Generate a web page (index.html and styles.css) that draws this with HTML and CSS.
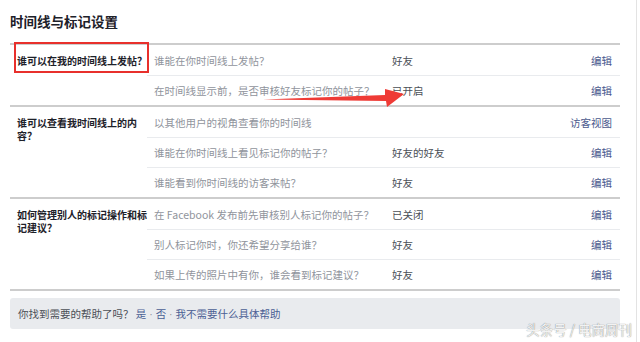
FILE: index.html
```html
<!DOCTYPE html>
<html lang="zh-CN">
<head>
  <meta charset="UTF-8" />
  <meta name="viewport" content="width=device-width, initial-scale=1.0"/>
  <title>时间线与标记设置</title>
  <link rel="stylesheet" href="styles.css">
</head>
<body>

  <div class="page">
    <h2 class="title">时间线与标记设置</h2>

    <div class="section">
      <div class="label">谁可以在我的时间线上发帖？</div>
      <div class="rows">
        <div class="row">
          <span class="question">谁能在你时间线上发帖？</span>
          <span class="value">好友</span>
          <a class="edit" href="#">编辑</a>
        </div>
        <div class="row">
          <span class="question">在时间线显示前，是否审核好友标记你的帖子？</span>
          <span class="value">已开启</span>
          <a class="edit" href="#">编辑</a>
        </div>
      </div>
    </div>

    <div class="section">
      <div class="label">谁可以查看我时间线上的内容？</div>
      <div class="rows">
        <div class="row">
          <span class="question">以其他用户的视角查看你的时间线</span>
          <span class="value"></span>
          <a class="edit" href="#">访客视图</a>
        </div>
        <div class="row">
          <span class="question">谁能在你时间线上看见标记你的帖子？</span>
          <span class="value">好友的好友</span>
          <a class="edit" href="#">编辑</a>
        </div>
        <div class="row">
          <span class="question">谁能看到你时间线的访客来帖？</span>
          <span class="value">好友</span>
          <a class="edit" href="#">编辑</a>
        </div>
      </div>
    </div>

    <div class="section last">
      <div class="label">如何管理别人的标记操作和标记建议？</div>
      <div class="rows">
        <div class="row">
          <span class="question">在 Facebook 发布前先审核别人标记你的帖子？</span>
          <span class="value">已关闭</span>
          <a class="edit" href="#">编辑</a>
        </div>
        <div class="row">
          <span class="question">别人标记你时，你还希望分享给谁？</span>
          <span class="value">好友</span>
          <a class="edit" href="#">编辑</a>
        </div>
        <div class="row">
          <span class="question">如果上传的照片中有你，谁会看到标记建议？</span>
          <span class="value">好友</span>
          <a class="edit" href="#">编辑</a>
        </div>
      </div>
    </div>

    <div class="help">
      你找到需要的帮助了吗？ <a href="#">是</a><span class="sep"> · </span><a href="#">否</a><span class="sep"> · </span><a href="#">我不需要什么具体帮助</a>
    </div>
  </div>

  <!-- annotations drawn over the screenshot -->
  <div class="mark-box"></div>
  <svg class="mark-arrow" width="640" height="342" viewBox="0 0 640 342">
    <polygon points="263,99.5 385,95 385,89 404,94 387,107 386,101" fill="#ef3b36"/>
  </svg>

  <div class="watermark">头条号 / 电商周刊</div>

</body>
</html>
```

FILE: styles.css
```css
body {
  margin: 0;
  background: #fff;
  font-family: "Noto Sans CJK SC", "Liberation Sans", sans-serif;
  color: #4b4f56;
  position: relative;
  overflow: hidden;
}

.page {
  width: 626px;
  min-height: 342px;
  padding-left: 10px;
  border-right: 1px solid #e3e3e3;
}

.title {
  margin: 0;
  padding-top: 11px;
  font-size: 13.5px;
  line-height: 20px;
  font-weight: bold;
  color: #1d2129;
  height: 32px;
}

.section {
  display: flex;
  width: 610px;
  border-top: 2px solid #cdcdcd;
}

.section.last {
  border-bottom: 2px solid #cdcdcd;
}

.label {
  width: 130px;
  padding: 9px 0 0 7px;
  font-size: 10px;
  line-height: 13px;
  font-weight: bold;
  color: #1d2129;
}

.rows {
  flex: 1;
}

.row {
  display: flex;
  align-items: center;
  height: 30px;
  box-sizing: border-box;
  padding: 0 8px 0 7px;
  font-size: 10.5px;
}

.row + .row {
  border-top: 1px solid #e9ebee;
}

.question {
  width: 238px;
  color: #90949c;
  white-space: nowrap;
}

.value {
  flex: 1;
  color: #4b4f56;
}

.edit {
  color: #4b5a8e;
  text-decoration: none;
}

.help {
  width: 602px;
  margin-top: 7px;
  height: 31px;
  line-height: 31px;
  padding-left: 8px;
  background: #e9ebee;
  border-radius: 3px;
  font-size: 10.5px;
  color: #4b4f56;
}

.help a {
  color: #4b5f94;
  text-decoration: none;
}

.help .sep {
  font-family: "Liberation Sans", sans-serif;
  color: #90949c;
}

.mark-box {
  position: absolute;
  left: 14px;
  top: 42px;
  width: 131px;
  height: 27px;
  border: 2px solid #e8302c;
}

.mark-arrow {
  position: absolute;
  left: 0;
  top: 0;
}

.watermark {
  position: absolute;
  right: 8px;
  top: 319px;
  font-size: 13.5px;
  color: #f2f2f2;
  text-shadow: 0 0 1px rgba(0, 0, 0, 0.6);
}
```
